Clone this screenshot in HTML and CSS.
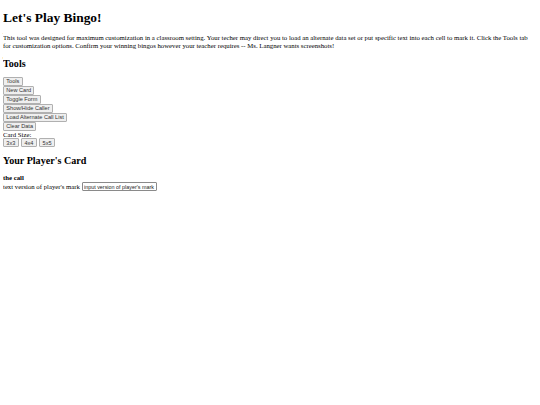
FILE: index.html
```html
<!DOCTYPE html>
<html lang="en">
<head>
<meta charset="utf-8">
<title>Let's Play Bingo!</title>
<link rel="stylesheet" href="styles.css">
</head>
<body>
<h1 class="title">Let's Play Bingo!</h1>
<p class="intro">This tool was designed for maximum customization in a classroom setting. Your techer may direct you to load an alternate data set or put specific text into each cell to mark it. Click the Tools tab for customization options. Confirm your winning bingos however your teacher requires -- Ms. Langner wants screenshots!</p>
<h2 class="section">Tools</h2>
<div class="tools">
  <div><button class="btn" type="button">Tools</button></div>
  <div><button class="btn" type="button">New Card</button></div>
  <div><button class="btn" type="button">Toggle Form</button></div>
  <div><button class="btn" type="button">Show/Hide Caller</button></div>
  <div><button class="btn" type="button">Load Alternate Call List</button></div>
  <div><button class="btn" type="button">Clear Data</button></div>
  <div class="label">Card Size:</div>
  <div class="sizes"><button class="btn" type="button">3x3</button> <button class="btn" type="button">4x4</button> <button class="btn" type="button">5x5</button></div>
</div>
<h2 class="section section-card">Your Player's Card</h2>
<div class="call">
  <div class="call-title">the call</div>
  <div class="call-row">text version of player's mark <input class="mark" type="text" value="input version of player's mark"></div>
</div>
</body>
</html>
```
FILE: styles.css
```css
body {
  margin: 3px;
  font-family: "Liberation Serif", "Times New Roman", serif;
  font-size: 6.75px;
  line-height: 8px;
  background: #ffffff;
  color: #000000;
}
.title {
  font-size: 13.45px;
  line-height: 15.5px;
  font-weight: bold;
  margin: 6.5px 0 8.5px;
}
.intro {
  margin: 6.75px 0;
}
.section {
  font-size: 10.1px;
  line-height: 11.6px;
  font-weight: bold;
  margin: 8.4px 0 7.6px;
}
.section-card {
  margin-top: 7.8px;
}
.tools div {
  line-height: 9px;
}
.tools .label {
  line-height: 7.4px;
}
.btn {
  font-family: "Liberation Sans", Arial, sans-serif;
  font-size: 5.6px;
  line-height: 6.2px;
  height: 9px;
  padding: 0 2.3px;
  margin: 0;
  color: #333333;
  background: #efefef;
  border: 1px solid #b0b0b0;
  border-radius: 1px;
  vertical-align: top;
}
.sizes {
  display: flex;
  gap: 2.5px;
}
.call-title {
  font-weight: bold;
}
.call-row {
  display: flex;
  align-items: center;
  gap: 2px;
}
.mark {
  font-family: "Liberation Sans", Arial, sans-serif;
  font-size: 5.4px;
  width: 75px;
  height: 9px;
  box-sizing: border-box;
  padding: 0 1px;
  margin: 0;
  color: #222222;
  border: 1px solid #8a8a8a;
  border-radius: 1px;
}
```
